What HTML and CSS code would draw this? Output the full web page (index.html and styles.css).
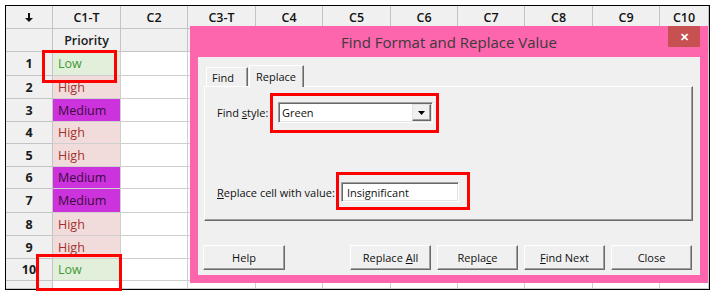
FILE: index.html
```html
<!DOCTYPE html>
<html>
<head>
<meta charset="utf-8">
<link rel="stylesheet" href="styles.css">
</head>
<body>
<div class="stage">
  <div class="sheet">
    <div class="c h"><svg class="arr" width="8" height="9" viewBox="0 0 8 9"><path d="M3 0h2v5h3L4 9 0 5h3z" fill="#111"/></svg></div>
    <div class="c h">C1-T</div><div class="c h">C2</div><div class="c h">C3-T</div><div class="c h">C4</div><div class="c h">C5</div><div class="c h">C6</div><div class="c h">C7</div><div class="c h">C8</div><div class="c h">C9</div><div class="c h">C10</div>

    <div class="c n"></div>
    <div class="c h2">Priority</div><div class="c h2"></div><div class="c h2"></div><div class="c h2"></div><div class="c h2"></div><div class="c h2"></div><div class="c h2"></div><div class="c h2"></div><div class="c h2"></div><div class="c h2"></div>

    <div class="c n">1</div><div class="c low">Low</div><div class="c"></div><div class="c"></div><div class="c"></div><div class="c"></div><div class="c"></div><div class="c"></div><div class="c"></div><div class="c"></div><div class="c"></div>
    <div class="c n">2</div><div class="c high">High</div><div class="c"></div><div class="c"></div><div class="c"></div><div class="c"></div><div class="c"></div><div class="c"></div><div class="c"></div><div class="c"></div><div class="c"></div>
    <div class="c n">3</div><div class="c med">Medium</div><div class="c"></div><div class="c"></div><div class="c"></div><div class="c"></div><div class="c"></div><div class="c"></div><div class="c"></div><div class="c"></div><div class="c"></div>
    <div class="c n">4</div><div class="c high">High</div><div class="c"></div><div class="c"></div><div class="c"></div><div class="c"></div><div class="c"></div><div class="c"></div><div class="c"></div><div class="c"></div><div class="c"></div>
    <div class="c n">5</div><div class="c high">High</div><div class="c"></div><div class="c"></div><div class="c"></div><div class="c"></div><div class="c"></div><div class="c"></div><div class="c"></div><div class="c"></div><div class="c"></div>
    <div class="c n">6</div><div class="c med">Medium</div><div class="c"></div><div class="c"></div><div class="c"></div><div class="c"></div><div class="c"></div><div class="c"></div><div class="c"></div><div class="c"></div><div class="c"></div>
    <div class="c n">7</div><div class="c med">Medium</div><div class="c"></div><div class="c"></div><div class="c"></div><div class="c"></div><div class="c"></div><div class="c"></div><div class="c"></div><div class="c"></div><div class="c"></div>
    <div class="c n">8</div><div class="c high">High</div><div class="c"></div><div class="c"></div><div class="c"></div><div class="c"></div><div class="c"></div><div class="c"></div><div class="c"></div><div class="c"></div><div class="c"></div>
    <div class="c n">9</div><div class="c high">High</div><div class="c"></div><div class="c"></div><div class="c"></div><div class="c"></div><div class="c"></div><div class="c"></div><div class="c"></div><div class="c"></div><div class="c"></div>
    <div class="c n">10</div><div class="c low">Low</div><div class="c"></div><div class="c"></div><div class="c"></div><div class="c"></div><div class="c"></div><div class="c"></div><div class="c"></div><div class="c"></div><div class="c"></div>
    <div class="c n"></div><div class="c"></div><div class="c"></div><div class="c"></div><div class="c"></div><div class="c"></div><div class="c"></div><div class="c"></div><div class="c"></div><div class="c"></div><div class="c"></div>
  </div>

  <div class="mark mark1"></div>
  <div class="mark mark2"></div>

  <div class="dialog">
    <div class="titlebar">
      <span class="title">Find Format and Replace Value</span>
      <div class="close">&#x2715;</div>
    </div>
    <div class="client">
      <div class="tabs">
        <div class="tab">Find</div>
        <div class="tab active">Replace</div>
      </div>
      <div class="panel">
        <div class="field field1">
          <span class="lbl">Find <u>s</u>tyle:</span>
          <div class="combo"><span class="val">Green</span><span class="drop"><svg width="7" height="4" viewBox="0 0 7 4"><path d="M0 0h7L3.5 4z" fill="#000"/></svg></span></div>
        </div>
        <div class="field field2">
          <span class="lbl"><u>R</u>eplace cell with value:</span>
          <div class="input">Insignificant</div>
        </div>
      </div>
      <div class="buttons">
        <div class="btn"><span>Help</span></div>
        <div class="group">
          <div class="btn"><span>Replace <u>A</u>ll</span></div>
          <div class="btn"><span>Repla<u>c</u>e</span></div>
          <div class="btn"><span><u>F</u>ind Next</span></div>
          <div class="btn"><span>Close</span></div>
        </div>
      </div>
    </div>
    <div class="mark mark3"></div>
    <div class="mark mark4"></div>
  </div>
</div>
</body>
</html>
```

FILE: styles.css
```css
* { box-sizing: border-box; }
html, body { margin: 0; padding: 0; background: #fff; }
body { width: 717px; height: 297px; overflow: hidden; font-family: "Open Sans", "Noto Sans", sans-serif; }

.stage { position: relative; width: 717px; height: 297px; padding: 5px 0 0 5px; }

.sheet {
  width: 705px; height: 285px;
  border: 1px solid #000;
  display: grid;
  grid-template-columns: 47px 68px 67px 68px 67px 68px 67px 67px 68px 67px 1fr;
  grid-template-rows: 23px 23px 24px 23px 23px 22px 23px 22px 24px 23px 23px 22px 8px;
  overflow: hidden;
  background: #fff;
}
.c {
  border-right: 1px solid #cfcfcf;
  border-bottom: 1px solid #cfcfcf;
  background: #fff;
  font-size: 12.5px;
  color: #1a1a1a;
  display: flex; align-items: center;
  padding-left: 5px;
  white-space: nowrap; overflow: hidden;
}
.h, .h2 { background: #f0f0f0; justify-content: center; padding-left: 0; font-weight: 600; border-color: #c4c4c4; }
.h { color: #111; }
.n { background: #f0f0f0; justify-content: center; padding-left: 0; font-weight: 700; border-color: #c4c4c4; }
.arr { display: block; }
.low { background: #e2efda; color: #3f9a3a; }
.high { background: #f2dcdb; color: #a4302e; }
.med { background: #cc33dd; color: #3a0c3c; }

.mark { position: absolute; border: 3px solid #ff0000; }
.mark1 { left: 42px; top: 50px; width: 75px; height: 33px; }
.mark2 { left: 36px; top: 254px; width: 86px; height: 37px; }

.dialog {
  position: absolute; left: 190px; top: 26px;
  width: 518px; height: 257px;
  background: #fd65ad;
  padding: 0 8px 8px 8px;
  display: flex; flex-direction: column;
}
.titlebar { height: 31px; display: flex; align-items: center; justify-content: center; position: relative; }
.title { font-size: 15px; color: #3a3a3a; margin-top: 1px; }
.close {
  position: absolute; right: 0; top: 0; width: 32px; height: 21px;
  background: #c75050; color: #fff; font-size: 11px; font-weight: 700;
  display: flex; align-items: center; justify-content: center;
}
.client { flex: 1; background: #f0f0f0; padding: 7px 8px 0 5px; display: flex; flex-direction: column; font-size: 11px; color: #111; }

.tabs { display: flex; align-items: flex-end; padding-left: 3px; height: 22px; }
.tab {
  height: 19px; padding: 0 5px; width: 42px;
  border: 1px solid #fff; border-right-color: #696969; border-bottom: none;
  box-shadow: inset -1px 0 0 #a0a0a0;
  display: flex; align-items: center;
}
.tab.active { height: 22px; width: 55px; margin-left: 1px; margin-bottom: -1px; background: #f0f0f0; position: relative; z-index: 1; padding-left: 6px; }

.panel {
  margin-left: 1px; width: 489px; height: 135px;
  border: 1px solid; border-color: #fff #696969 #696969 #fff;
  box-shadow: inset -1px -1px 0 #a0a0a0;
  padding: 15px 0 0 12px;
}
.field { display: flex; align-items: center; }
.lbl { white-space: nowrap; }
.field1 .lbl { width: 61px; }
.field2 { margin-top: 59px; }
.field2 .lbl { width: 124px; }
.combo {
  width: 155px; height: 21px; background: #fff;
  border: 1px solid; border-color: #a0a0a0 #fff #fff #a0a0a0;
  box-shadow: inset 1px 1px 0 #696969, inset -1px -1px 0 #e3e3e3;
  display: flex; align-items: center; padding: 0 1px 0 3px;
}
.combo .val { flex: 1; }
.drop {
  width: 19px; height: 17px; background: #f0f0f0;
  border: 1px solid; border-color: #e3e3e3 #696969 #696969 #e3e3e3;
  box-shadow: inset -1px -1px 0 #a0a0a0;
  display: flex; align-items: center; justify-content: center;
}
.drop svg { display: block; }
.input {
  width: 118px; height: 20px; background: #fff;
  border: 1px solid; border-color: #a0a0a0 #fff #fff #a0a0a0;
  box-shadow: inset 1px 1px 0 #696969, inset -1px -1px 0 #e3e3e3;
  display: flex; align-items: center; padding-left: 5px;
}

.buttons { display: flex; margin-top: 24px; }
.group { margin-left: auto; display: flex; gap: 6px; }
.btn {
  width: 81px; height: 25px;
  border: 1px solid; border-color: #fff #696969 #696969 #fff;
  box-shadow: inset -1px -1px 0 #a0a0a0;
  background: #f0f0f0;
  display: flex; align-items: center; justify-content: center;
  white-space: nowrap;
}
.buttons > .btn { width: 82px; }

.mark3 { left: 80px; top: 67px; width: 169px; height: 40px; }
.mark4 { left: 146px; top: 146px; width: 134px; height: 38px; }
```
